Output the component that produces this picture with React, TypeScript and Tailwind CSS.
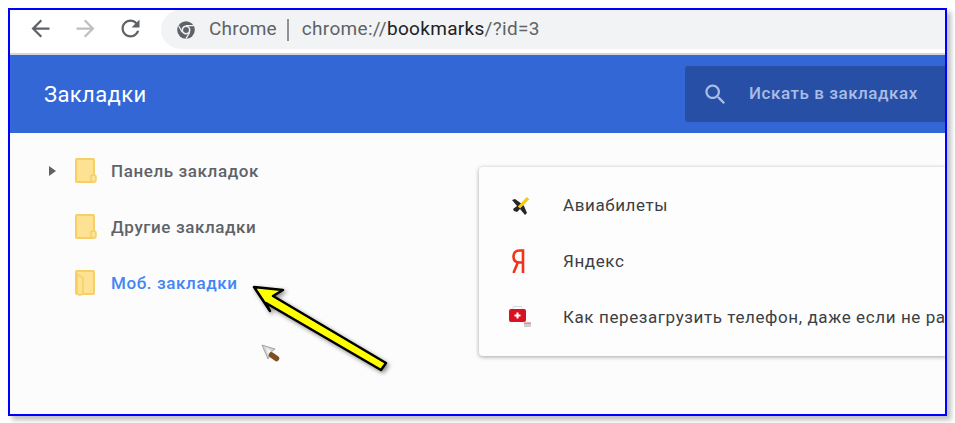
function FolderIcon({ open }: { open?: boolean }) {
  return (
    <svg width="22" height="26" viewBox="0 0 22 26" className="shrink-0">
      <rect x="1" y="1" width="18" height="23" rx="1" fill="#fde293" stroke="#f6cf65" strokeWidth="2" />
      {open ? (
        <path d="M2 4 L8 8 V22 Q8 25 5 25 Q2 25 2 22 Z" fill="#fde293" stroke="#f6cf65" strokeWidth="1.5" />
      ) : (
        <rect x="16" y="17" width="5" height="7" rx="2" fill="#fde293" stroke="#f6cf65" strokeWidth="1.5" />
      )}
    </svg>
  );
}

function MaterialIcon({ d, size, className }: { d: string; size: number; className: string }) {
  return (
    <svg width={size} height={size} viewBox="0 0 24 24" fill="currentColor" className={className}>
      <path d={d} />
    </svg>
  );
}

const backPath = "M20 11H7.83l5.59-5.59L12 4l-8 8 8 8 1.41-1.41L7.83 13H20v-2z";
const forwardPath = "M4 11h12.17l-5.59-5.59L12 4l8 8-8 8-1.41-1.41L16.17 13H4v-2z";
const reloadPath =
  "M17.65 6.35C16.2 4.9 14.21 4 12 4c-4.42 0-7.99 3.58-7.99 8s3.57 8 7.99 8c3.73 0 6.84-2.55 7.73-6h-2.08c-.82 2.33-3.04 4-5.65 4-3.31 0-6-2.69-6-6s2.69-6 6-6c1.66 0 3.14.69 4.22 1.78L13 11h7V4l-2.35 2.35z";
const searchPath =
  "M15.5 14h-.79l-.28-.27C15.41 12.59 16 11.11 16 9.5 16 5.91 13.09 3 9.5 3S3 5.91 3 9.5 5.91 16 9.5 16c1.61 0 3.09-.59 4.23-1.57l.27.28v.79l5 4.99L20.49 19l-4.99-5zm-6 0C7.01 14 5 11.99 5 9.5S7.01 5 9.5 5 14 7.01 14 9.5 11.99 14 9.5 14z";

function ChromeIcon() {
  return (
    <svg width="18" height="18" viewBox="0 0 18 18">
      <circle cx="9" cy="9" r="8.8" fill="#5f6368" />
      <circle cx="9" cy="9" r="3.7" fill="#5f6368" stroke="#f1f3f4" strokeWidth="1.5" />
      <path d="M9 4.6 H16.6 M5.2 11.2 L1.6 4.8 M12.8 11.2 L9 17.6" stroke="#f1f3f4" strokeWidth="1.2" />
    </svg>
  );
}

function PlaneIcon() {
  return (
    <svg width="20" height="21" viewBox="0 0 20 21">
      <path d="M3 5 L6 4 L13 9 L15 11 L18 18 L16 20 L11 14 L8 17 L5 16 L4 14 L8 11 Z" fill="#26262b" />
      <path d="M10 12.5 L19 3" stroke="#f7c90f" strokeWidth="3.2" />
    </svg>
  );
}

function YandexIcon() {
  return (
    <svg width="13" height="24" viewBox="0 0 13 24" className="ml-[3px]">
      <path d="M11 24 V1.5 H7.5 C3.5 1.5 1.5 4 1.5 7.5 C1.5 11 3.5 13.5 7.5 13.5 H11 M6 13 L1.5 24" fill="none" stroke="#f0331a" strokeWidth="2.6" />
    </svg>
  );
}

function MedIcon() {
  return (
    <svg width="24" height="22" viewBox="0 0 24 22" className="-ml-[1px]">
      <rect x="5" y="0.5" width="9" height="4" rx="1" fill="none" stroke="#d6d6d6" />
      <rect x="1" y="3" width="17" height="13" rx="2" fill="#d9121f" />
      <path d="M9.5 6.5 V12.5 M6.5 9.5 H12.5" stroke="#fff" strokeWidth="2" />
      <rect x="16" y="17" width="7" height="4" fill="#cfcfcf" />
      <rect x="16" y="16.5" width="7" height="1.2" fill="#e57373" />
    </svg>
  );
}

function SideRow({ label, arrow, active }: { label: string; arrow?: boolean; active?: boolean }) {
  return (
    <div className="flex h-14 items-center">
      <div className="flex w-[27px] justify-start pl-[1px]">
        {arrow && <div className="h-0 w-0 border-y-[5px] border-l-[7px] border-y-transparent border-l-[#5f6368]" />}
      </div>
      <FolderIcon open={active} />
      <span className={`ml-[14px] pt-[2px] text-[17px] font-medium tracking-[0.6px] ${active ? "text-[#4285f4]" : "text-[#5f6368]"}`}>
        {label}
      </span>
    </div>
  );
}

function CardRow({ icon, label }: { icon: React.ReactNode; label: string }) {
  return (
    <div className="flex h-14 items-center">
      <div className="flex w-[84px] justify-start pl-[30px]">{icon}</div>
      <span className="whitespace-nowrap pt-[2px] text-[17px] tracking-[0.6px] text-[#3c4043]">{label}</span>
    </div>
  );
}

export default function App() {
  return (
    <div className="relative h-[423px] w-[955px] overflow-hidden bg-white p-2 font-['Roboto',sans-serif]">
      <div className="flex h-[408px] w-[939px] flex-col overflow-hidden border-2 border-[#0000ff] bg-[#fcfcfc] shadow-[4px_4px_5px_rgba(0,0,0,0.25)]">
        <div className="flex h-[45px] shrink-0 items-start border-b-2 border-[#d4d5d6] bg-white">
          <MaterialIcon d={backPath} size={27} className="ml-[17px] mt-[5px] text-[#5f6368]" />
          <MaterialIcon d={forwardPath} size={27} className="ml-[18px] mt-[5px] text-[#bdbfc1]" />
          <MaterialIcon d={reloadPath} size={27} className="ml-[18px] mt-[5px] text-[#5f6368]" />
          <div className="ml-[17px] flex h-[39px] flex-1 items-center rounded-l-[20px] bg-[#f1f3f4] pl-[16px]">
            <ChromeIcon />
            <span className="ml-[14px] text-[19px] tracking-[0.2px] text-[#5f6368]">Chrome</span>
            <div className="ml-[10px] h-[22px] w-[2px] bg-[#8f9295]" />
            <span className="ml-[13px] text-[19px] tracking-[0.3px] text-[#5f6368]">
              chrome://<span className="text-[#202124]">bookmarks</span>/?id=3
            </span>
          </div>
        </div>
        <div className="flex h-[78px] shrink-0 items-center justify-between bg-[#3367d6]">
          <span className="ml-[34px] text-[22px] tracking-[0.4px] text-white">Закладки</span>
          <div className="flex h-[56px] w-[260px] items-center rounded-l-[3px] bg-[#284fa6]">
            <MaterialIcon d={searchPath} size={27} className="ml-[17px] text-[#a9bde6]" />
            <span className="ml-[20px] text-[17px] font-medium tracking-[0.55px] text-[#a9bde6]">Искать в закладках</span>
          </div>
        </div>
        <div className="flex flex-1 items-start">
          <div className="ml-[38px] mt-[10px] w-[431px] shrink-0">
            <SideRow label="Панель закладок" arrow />
            <SideRow label="Другие закладки" />
            <SideRow label="Моб. закладки" active />
          </div>
          <div className="mt-[34px] h-[189px] flex-1 rounded-l-[4px] bg-[#fdfdfd] py-[10px] shadow-[0_1px_4px_rgba(0,0,0,0.35)]">
            <CardRow icon={<PlaneIcon />} label="Авиабилеты" />
            <CardRow icon={<YandexIcon />} label="Яндекс" />
            <CardRow icon={<MedIcon />} label="Как перезагрузить телефон, даже если не ра" />
          </div>
        </div>
      </div>

      {/* arrow annotation */}
      <svg width="160" height="100" viewBox="0 0 160 100" className="absolute left-[245px] top-[280px]">
        <defs>
          <filter id="s" x="-20%" y="-20%" width="140%" height="140%">
            <feDropShadow dx="2" dy="2" stdDeviation="2" floodColor="#000" floodOpacity="0.45" />
          </filter>
        </defs>
        <path
          d="M9 7 L38 10 L28 16 L141 83 L136 90 L21 23 L25 31 Z"
          fill="#ffff00"
          stroke="#000"
          strokeWidth="2.5"
          strokeLinejoin="round"
          filter="url(#s)"
        />
      </svg>

      {/* cursor */}
      <svg width="20" height="20" viewBox="0 0 20 20" className="absolute left-[261px] top-[344px]">
        <path d="M1 1 L14 5 L10 8 L7 15 Z" fill="#d2d4d6" stroke="#85888b" strokeWidth="0.7" />
        <path d="M5 3 L10 7 L7 11 Z" fill="#f4f4f4" />
        <path d="M10.5 11 L15.5 14.5" stroke="#7f4f22" strokeWidth="5.5" strokeLinecap="round" />
      </svg>
    </div>
  );
}
